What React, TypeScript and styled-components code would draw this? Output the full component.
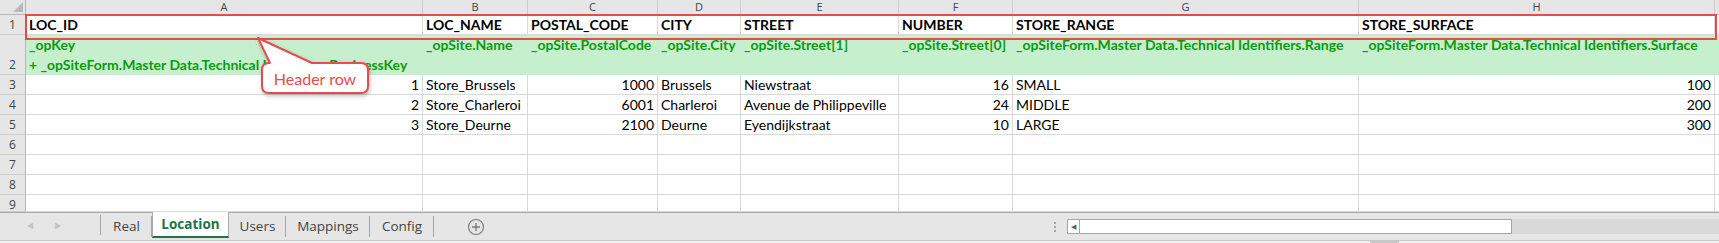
import React from 'react';
import styled, { createGlobalStyle, css } from 'styled-components';

const GlobalStyle = createGlobalStyle`
  html, body {
    margin: 0;
    padding: 0;
    background: #ffffff;
  }
  body {
    width: 1719px;
    height: 243px;
    overflow: hidden;
    font-family: Lato, "Liberation Sans", sans-serif;
  }
`;

const COLS = [26, 397, 105, 130, 83, 158, 114, 346, 356];
const ROWS = [15, 20, 40, 20, 20, 20, 20, 20, 20, 17];

const Window = styled.div`
  display: flex;
  flex-direction: column;
  width: 1719px;
  height: 243px;
`;

const SheetArea = styled.div`
  position: relative;
  height: 212px;
  overflow: hidden;
`;

const Grid = styled.div`
  display: grid;
  grid-template-columns: ${COLS.map((c) => `${c}px`).join(' ')} 1fr;
  grid-template-rows: ${ROWS.map((r) => `${r}px`).join(' ')};
`;

type Variant = 'corner' | 'colhead' | 'rowhead' | 'title' | 'map' | 'data';

const Cell = styled.div<{ $variant: Variant; $align?: 'left' | 'right' | 'center' }>`
  box-sizing: border-box;
  overflow: hidden;
  white-space: pre;
  padding: 0 3px;
  font-size: 14px;
  line-height: 20px;
  color: #000;
  text-align: ${({ $align }) => $align || 'left'};
  border-right: 1px solid #d9d9d9;
  border-bottom: 1px solid #d9d9d9;
  background: #ffffff;

  ${({ $variant }) => $variant === 'colhead' && css`
    background: #e6e6e6;
    border-right: 1px solid #cdcdcd;
    border-bottom: 1px solid #b5b5b5;
    font-family: "Open Sans", "Noto Sans", sans-serif;
    font-size: 11px;
    line-height: 14px;
    color: #444;
    text-align: center;
    padding: 0;
  `}
  ${({ $variant }) => $variant === 'corner' && css`
    position: relative;
    background: #e6e6e6;
    border-right: 1px solid #b5b5b5;
    border-bottom: 1px solid #b5b5b5;
  `}
  ${({ $variant }) => $variant === 'rowhead' && css`
    background: #e6e6e6;
    border-right: 1px solid #b5b5b5;
    border-bottom: 1px solid #cdcdcd;
    font-family: "Open Sans", "Noto Sans", sans-serif;
    font-size: 12px;
    color: #444;
    text-align: center;
    padding: 0;
  `}
  ${({ $variant }) => $variant === 'title' && css`
    font-weight: 700;
  `}
  ${({ $variant }) => $variant === 'map' && css`
    background: #c6efce;
    border-right: none;
    border-bottom: none;
    color: #0d9a12;
    font-weight: 700;
  `}
`;

const CornerMark = styled.div`
  position: absolute;
  right: 2px;
  bottom: 2px;
  width: 0;
  height: 0;
  border-left: 10px solid transparent;
  border-bottom: 10px solid #b9b9b9;
`;

const HighlightBox = styled.div`
  position: absolute;
  left: 25px;
  top: 14px;
  width: 1692px;
  height: 26px;
  box-sizing: border-box;
  border: 2px solid #e84b4b;
  pointer-events: none;
`;

const Callout = styled.div`
  position: absolute;
  left: 250px;
  top: 34px;
  width: 126px;
  height: 66px;
`;

const CalloutText = styled.span`
  position: absolute;
  left: 12px;
  top: 29px;
  width: 106px;
  height: 30px;
  display: flex;
  align-items: center;
  justify-content: center;
  font-family: Lato, "Liberation Sans", sans-serif;
  font-size: 16px;
  color: #e84b4b;
`;

const TabBar = styled.div`
  display: flex;
  align-items: stretch;
  height: 28px;
  box-sizing: border-box;
  background: #e6e6e6;
  border-top: 1px solid #ababab;
`;

const NavArrows = styled.div`
  display: flex;
  align-items: center;
  gap: 22px;
  width: 101px;
  padding-left: 27px;
  box-sizing: border-box;
  color: #c4c4c4;
  font-size: 8px;
  border-right: 1px solid #a6a6a6;
  margin: 2px 0 5px;
`;

const Tab = styled.div<{ $active?: boolean; $w: number }>`
  display: flex;
  align-items: center;
  justify-content: center;
  box-sizing: border-box;
  width: ${({ $w }) => $w}px;
  height: 24px;
  font-family: "Open Sans", "Noto Sans", sans-serif;
  font-size: 13.5px;
  color: #444;
  margin-top: 1px;
  position: relative;

  ${({ $active }) => $active
    ? css`
      background: #ffffff;
      margin-top: -1px;
      height: 26px;
      color: #217346;
      font-weight: 700;
      border-left: 1px solid #ababab;
      border-right: 1px solid #ababab;
      border-bottom: 2px solid #217346;
    `
    : css`
      &::after {
        content: '';
        position: absolute;
        right: 0;
        top: 2px;
        bottom: 1px;
        width: 1px;
        background: #a6a6a6;
      }
    `}
`;

const AddSheet = styled.div`
  display: flex;
  align-items: center;
  margin-left: 33px;
`;

const Spacer = styled.div`
  flex: 1;
`;

const Handle = styled.div`
  display: flex;
  flex-direction: column;
  justify-content: center;
  gap: 2px;
  width: 12px;
  align-items: center;
  margin-right: 6px;

  span {
    width: 2px;
    height: 2px;
    background: #a6a6a6;
  }
`;

const ScrollTrack = styled.div`
  display: flex;
  align-items: center;
  width: 652px;
  margin-top: 6px;
  height: 15px;
  background: #d9d9d9;
`;

const ScrollThumb = styled.div`
  display: flex;
  width: 445px;
  height: 15px;
  box-sizing: border-box;
  border: 1px solid #a6a6a6;
  background: #ffffff;
`;

const ScrollButton = styled.div`
  width: 11px;
  border-right: 1px solid #a6a6a6;
  display: flex;
  align-items: center;
  justify-content: center;
  color: #606060;
  font-size: 7px;
`;

const StatusStrip = styled.div`
  height: 3px;
  box-sizing: border-box;
  background: #f0f0f0;
  border-top: 1px solid #c6c6c6;
  display: flex;
`;

const StripBlock = styled.div`
  margin-left: 1370px;
  width: 29px;
  background: #c8c8c8;
`;

const letters = ['A', 'B', 'C', 'D', 'E', 'F', 'G', 'H', ''];

const titles = ['LOC_ID', 'LOC_NAME', 'POSTAL_CODE', 'CITY', 'STREET', 'NUMBER', 'STORE_RANGE', 'STORE_SURFACE', ''];

const mappings = [
  '_opKey\n+ _opSiteForm.Master Data.Technical Identifiers.BusinessKey',
  '_opSite.Name',
  '_opSite.PostalCode',
  '_opSite.City',
  '_opSite.Street[1]',
  '_opSite.Street[0]',
  '_opSiteForm.Master Data.Technical Identifiers.Range',
  '_opSiteForm.Master Data.Technical Identifiers.Surface',
  '',
];

const stores = [
  ['1', 'Store_Brussels', '1000', 'Brussels', 'Niewstraat', '16', 'SMALL', '100'],
  ['2', 'Store_Charleroi', '6001', 'Charleroi', 'Avenue de Philippeville', '24', 'MIDDLE', '200'],
  ['3', 'Store_Deurne', '2100', 'Deurne', 'Eyendijkstraat', '10', 'LARGE', '300'],
];

const numeric = [true, false, true, false, false, true, false, true, false];

const tabs = [
  { name: 'Real', width: 51 },
  { name: 'Location', width: 77 },
  { name: 'Users', width: 57 },
  { name: 'Mappings', width: 84 },
  { name: 'Config', width: 64 },
];

const App = () => {
  const dataRows = [...stores, [], [], [], [], []];

  return (
    <Window>
      <GlobalStyle />
      <SheetArea>
        <Grid>
          <Cell $variant="corner"><CornerMark /></Cell>
          {letters.map((l, i) => (
            <Cell key={`h${i}`} $variant="colhead">{l}</Cell>
          ))}

          <Cell $variant="rowhead">1</Cell>
          {titles.map((t, i) => (
            <Cell key={`t${i}`} $variant="title">{t}</Cell>
          ))}

          <Cell $variant="rowhead" style={{ paddingTop: 20 }}>2</Cell>
          {mappings.map((m, i) => (
            <Cell key={`m${i}`} $variant="map">{m}</Cell>
          ))}

          {dataRows.map((row, r) => (
            <React.Fragment key={`r${r}`}>
              <Cell $variant="rowhead">{r + 3}</Cell>
              {letters.map((_, c) => (
                <Cell key={c} $variant="data" $align={numeric[c] ? 'right' : 'left'}>
                  {row[c] || ''}
                </Cell>
              ))}
            </React.Fragment>
          ))}
        </Grid>

        <HighlightBox />
        <Callout>
          <svg width="126" height="66" viewBox="0 0 126 66">
            <defs>
              <filter id="shadow" x="-20%" y="-20%" width="140%" height="150%">
                <feDropShadow dx="1" dy="2" stdDeviation="2" floodColor="#000" floodOpacity="0.25" />
              </filter>
            </defs>
            <path
              d="M20 29 L8 4 L62 29 L111 29 Q118 29 118 36 L118 52 Q118 59 111 59 L19 59 Q12 59 12 52 L12 36 Q12 29 19 29 Z"
              fill="#ffffff"
              stroke="#e84b4b"
              strokeWidth="2"
              strokeLinejoin="round"
              filter="url(#shadow)"
            />
          </svg>
          <CalloutText>Header row</CalloutText>
        </Callout>
      </SheetArea>

      <TabBar>
        <NavArrows>
          <span>◀</span>
          <span>▶</span>
        </NavArrows>
        {tabs.map((t) => (
          <Tab key={t.name} $w={t.width} $active={t.name === 'Location'}>{t.name}</Tab>
        ))}
        <AddSheet>
          <svg width="18" height="18" viewBox="0 0 18 18">
            <circle cx="9" cy="9" r="7.5" fill="none" stroke="#7b7b7b" strokeWidth="1.2" />
            <path d="M9 5 V13 M5 9 H13" stroke="#7b7b7b" strokeWidth="1.4" />
          </svg>
        </AddSheet>
        <Spacer />
        <Handle>
          <span />
          <span />
          <span />
        </Handle>
        <ScrollTrack>
          <ScrollThumb>
            <ScrollButton>◀</ScrollButton>
          </ScrollThumb>
        </ScrollTrack>
      </TabBar>
      <StatusStrip>
        <StripBlock />
      </StatusStrip>
    </Window>
  );
};

export default App;
